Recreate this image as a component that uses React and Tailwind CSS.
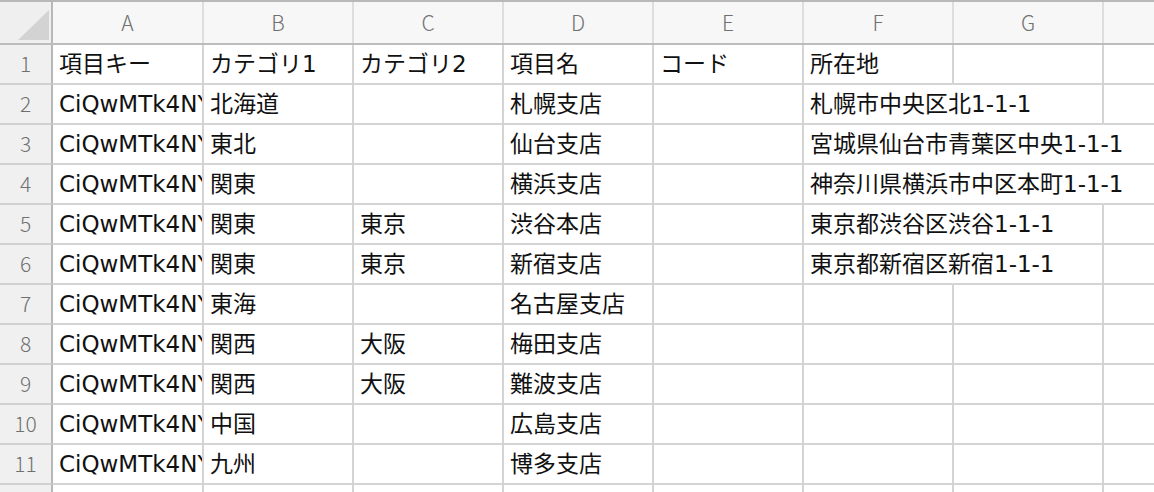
import React from 'react';

const cols = ['A', 'B', 'C', 'D', 'E', 'F', 'G', 'H'];

const rows = [
  { a: '項目キー', b: 'カテゴリ1', c: 'カテゴリ2', d: '項目名', e: 'コード', f: '所在地', span: 1 },
  { a: 'CiQwMTk4NYjE1LTdiYzUtNzI', b: '北海道', c: '', d: '札幌支店', e: '', f: '札幌市中央区北1-1-1', span: 2 },
  { a: 'CiQwMTk4NYjE1LTdiYzUtNzI', b: '東北', c: '', d: '仙台支店', e: '', f: '宮城県仙台市青葉区中央1-1-1', span: 3 },
  { a: 'CiQwMTk4NYjE1LTdiYzUtNzI', b: '関東', c: '', d: '横浜支店', e: '', f: '神奈川県横浜市中区本町1-1-1', span: 3 },
  { a: 'CiQwMTk4NYjE1LTdiYzUtNzI', b: '関東', c: '東京', d: '渋谷本店', e: '', f: '東京都渋谷区渋谷1-1-1', span: 2 },
  { a: 'CiQwMTk4NYjE1LTdiYzUtNzI', b: '関東', c: '東京', d: '新宿支店', e: '', f: '東京都新宿区新宿1-1-1', span: 2 },
  { a: 'CiQwMTk4NYjE1LTdiYzUtNzI', b: '東海', c: '', d: '名古屋支店', e: '', f: '', span: 1 },
  { a: 'CiQwMTk4NYjE1LTdiYzUtNzI', b: '関西', c: '大阪', d: '梅田支店', e: '', f: '', span: 1 },
  { a: 'CiQwMTk4NYjE1LTdiYzUtNzI', b: '関西', c: '大阪', d: '難波支店', e: '', f: '', span: 1 },
  { a: 'CiQwMTk4NYjE1LTdiYzUtNzI', b: '中国', c: '', d: '広島支店', e: '', f: '', span: 1 },
  { a: 'CiQwMTk4NYjE1LTdiYzUtNzI', b: '九州', c: '', d: '博多支店', e: '', f: '', span: 1 },
  { a: '', b: '', c: '', d: '', e: '', f: '', span: 1 },
];

const gridCols = 'grid grid-cols-[53px_151px_150px_150px_150px_150px_150px_150px_150px]';

// latin glyphs from DejaVu are closest in width to the mac font in the shot
const cellFont = { fontFamily: '"DejaVu Sans", "Noto Sans CJK JP", sans-serif' };

const Cell = ({ children, className = '' }) => (
  <div
    className={`h-full border-r-2 border-b-2 border-[#d4d4d4] bg-white pl-[6px] flex items-center overflow-hidden whitespace-nowrap text-[23px] text-[#111] ${className}`}
    style={cellFont}
  >
    {children}
  </div>
);

export default function App() {
  return (
    <div
      className="w-[1154px] h-[492px] overflow-hidden bg-white"
      style={{ fontFamily: '"Noto Sans CJK JP", "Noto Sans", sans-serif' }}
    >
      <div className="w-[1254px]">
        {/* column header */}
        <div className={`${gridCols} h-[45px] border-t-2 border-b-2 border-t-[#b8b8b8] border-b-[#bcbcbc] bg-[#f7f7f7]`}>
          <div className="relative h-full bg-[#efefef] border-r-2 border-[#b8b8b8]">
            <svg className="absolute left-[18px] top-[8px]" width="31" height="30" viewBox="0 0 31 30">
              <polygon points="0,30 31,0 31,30" fill="#d3d3d3" />
            </svg>
          </div>
          {cols.map((c) => (
            <div
              key={c}
              className="h-full border-r-2 border-[#dedede] flex items-center justify-center text-[21px] font-light text-[#707070]"
            >
              {c}
            </div>
          ))}
        </div>

        {rows.map((r, i) => (
          <div key={i} className={`${gridCols} h-[40px]`}>
            <div className="h-full bg-[#f0f0f0] border-r-2 border-b-2 border-r-[#b8b8b8] border-b-[#d0d0d0] flex items-center justify-center text-[21px] font-light text-[#707070]">
              {i < 11 ? i + 1 : ''}
            </div>
            <Cell>{r.a}</Cell>
            <Cell>{r.b}</Cell>
            <Cell>{r.c}</Cell>
            <Cell>{r.d}</Cell>
            <Cell>{r.e}</Cell>
            {r.span === 3 && <Cell className="col-span-3">{r.f}</Cell>}
            {r.span === 2 && (
              <>
                <Cell className="col-span-2">{r.f}</Cell>
                <Cell />
              </>
            )}
            {r.span === 1 && (
              <>
                <Cell>{r.f}</Cell>
                <Cell />
                <Cell />
              </>
            )}
          </div>
        ))}
      </div>
    </div>
  );
}
